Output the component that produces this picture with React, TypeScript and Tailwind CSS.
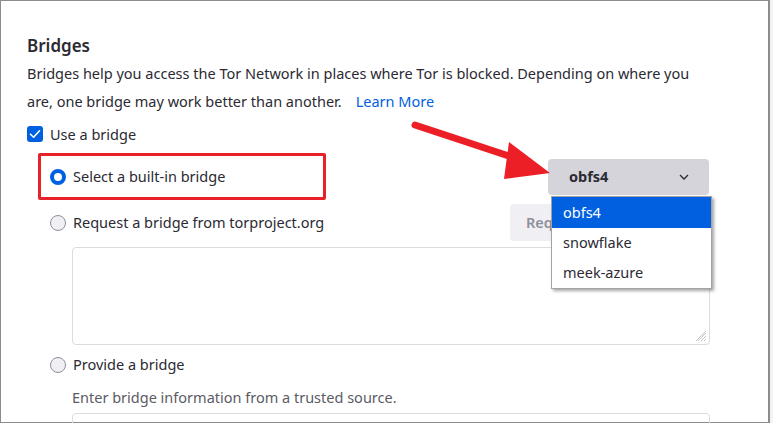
import React from 'react';

const font = { fontFamily: '"Noto Sans", "Open Sans", sans-serif' };

function Radio({ checked }: { checked?: boolean }) {
  if (checked) {
    return <span className="box-border inline-block h-4 w-4 shrink-0 rounded-full border-[4px] border-[#0061e0] bg-white" />;
  }
  return <span className="box-border inline-block h-4 w-4 shrink-0 rounded-full border border-[#8f8f9d] bg-[#f0f0f4]" />;
}

function Checkbox() {
  return (
    <span className="flex h-4 w-4 shrink-0 items-center justify-center rounded-[3px] bg-[#0061e0]">
      <svg width="12" height="12" viewBox="0 0 12 12" fill="none">
        <path d="M1.5 6.2 L4.6 9.2 L10.5 2.8" stroke="white" strokeWidth="1.6" strokeLinecap="round" strokeLinejoin="round" />
      </svg>
    </span>
  );
}

function ResizeGrip() {
  return (
    <svg className="absolute bottom-[2px] right-[2px]" width="12" height="12" viewBox="0 0 12 12">
      <path d="M11 3 L3 11 M11 6 L6 11 M11 9 L9 11 M11 1 L1 11" stroke="#b5b5b5" strokeWidth="0.8" />
    </svg>
  );
}

export default function App() {
  const options = ['obfs4', 'snowflake', 'meek-azure'];

  return (
    <div className="flex h-[423px] w-[773px] overflow-hidden bg-white text-[#2b2a33]" style={font}>
      <div className="relative h-full w-[770px] border-y border-l border-r-2 border-[#8c8c8c]">
        <div className="pl-[26px] pr-[58px] pt-[33px]">
          <h2 className="text-[17px] font-semibold leading-[24px]">Bridges</h2>
          <p className="mt-[1px] text-[14.5px] leading-[28px]">
            Bridges help you access the Tor Network in places where Tor is blocked. Depending on where you are, one bridge may work better than another.
            <a className="ml-[14px] text-[#0061e0]">Learn More</a>
          </p>

          <label className="mt-[7px] flex items-center gap-[7px] text-[14.5px] leading-[24px]">
            <Checkbox />
            <span>Use a bridge</span>
          </label>

          <div className="ml-[23px] mt-[13px]">
            <div className="flex h-[36px] items-center justify-between">
              <label className="flex items-center gap-[7px] text-[14.5px]">
                <Radio checked />
                <span>Select a built-in bridge</span>
              </label>
              <button className="mr-[1px] flex h-[36px] w-[161px] items-center justify-between rounded-[4px] bg-[#d4d4da] pl-[21px] pr-[20px] text-[14.5px] font-bold">
                <span>obfs4</span>
                <svg width="10" height="6" viewBox="0 0 10 6" fill="none">
                  <path d="M1 1 L5 5 L9 1" stroke="#2b2a33" strokeWidth="1.3" />
                </svg>
              </button>
            </div>

            <div className="mt-[9px] flex h-[37px] items-center justify-between">
              <label className="flex items-center gap-[7px] text-[14.5px]">
                <Radio />
                <span>Request a bridge from torproject.org</span>
              </label>
              <button className="mr-[40px] h-[37px] w-[160px] overflow-hidden whitespace-nowrap rounded-[4px] bg-[#f0f0f4] pl-[16px] text-left text-[14.5px] font-semibold text-[#8f8f9d]">
                Request a New Bridge…
              </button>
            </div>

            <div className="relative ml-[22px] mt-[6px] h-[98px] rounded-[4px] border border-[#dcdce0]">
              <ResizeGrip />
            </div>

            <label className="mt-[7px] flex h-[26px] items-center gap-[7px] text-[14.5px]">
              <Radio />
              <span>Provide a bridge</span>
            </label>

            <p className="ml-[22px] mt-[8px] text-[14.5px] leading-[22px] text-[#5b5b66]">
              Enter bridge information from a trusted source.
            </p>

            <div className="ml-[22px] mt-[5px] h-[60px] rounded-[4px] border border-[#dcdce0]" />
          </div>
        </div>

        {/* annotation: red box */}
        <div className="absolute left-[37px] top-[152px] h-[47px] w-[288px] rounded-[2px] border-[3px] border-[#e8202a]" />

        {/* annotation: arrow */}
        <svg className="absolute left-[405px] top-[117px]" width="150" height="63" viewBox="0 2 150 63">
          <path d="M9 9 L118 45" stroke="#ec1f27" strokeWidth="7" strokeLinecap="round" />
          <path d="M103 26 L144 57 L98 63 Z" fill="#ec1f27" />
        </svg>

        {/* open dropdown list */}
        <ul className="absolute left-[550px] top-[195px] w-[161px] border border-[#a3a3a3] bg-white text-[14.5px] shadow-[2px_2px_3px_rgba(0,0,0,0.35)]">
          {options.map((o, i) => (
            <li
              key={o}
              className={
                i === 0
                  ? 'flex h-[31px] items-center bg-[#0060df] pl-[11px] text-white'
                  : 'flex h-[30px] items-center pl-[11px]'
              }
            >
              {o}
            </li>
          ))}
        </ul>
      </div>
      <div className="h-full w-[3px] bg-[#f3f3f3]" />
    </div>
  );
}
